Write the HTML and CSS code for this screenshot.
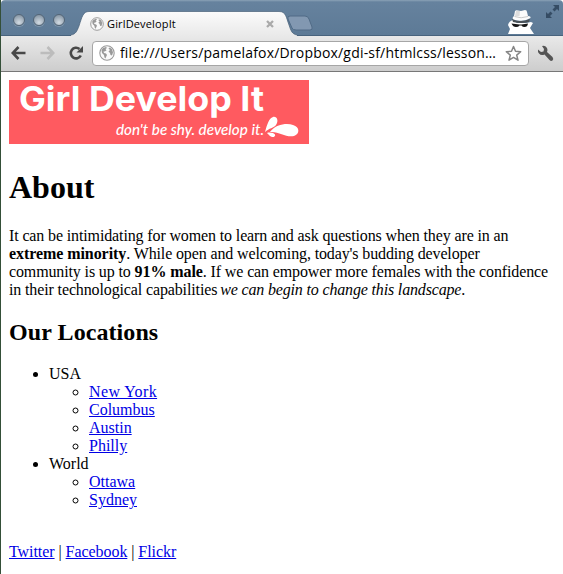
FILE: index.html
```html
<!DOCTYPE html>
<html lang="en">
<head>
<meta charset="utf-8">
<title>GirlDevelopIt</title>
<link rel="stylesheet" href="styles.css">
</head>
<body>
<div class="window">
  <header class="tabstrip">
    <div class="lights"><i></i><i></i><i></i></div>
    <div class="tab">
      <svg class="tab-shape" width="226" height="25" viewBox="0 0 226 25">
        <defs><linearGradient id="tabfill" x2="0" y2="1"><stop stop-color="#fbfbfb"/><stop offset="1" stop-color="#e9e9e9"/></linearGradient></defs>
        <path d="M0 25V24C5 23 6 20 8 15C11 6 12 .5 18 .5H208C215 .5 215 6 218 14C220 20 221 23 226 24V25Z" fill="url(#tabfill)"/>
        <path d="M0 24C5 23 6 20 8 15C11 6 12 .5 18 .5H208C215 .5 215 6 218 14C220 20 221 23 226 24" fill="none" stroke="#425b73" stroke-opacity=".65"/>
      </svg>
      <div class="tab-content">
        <svg width="14" height="14" viewBox="0 0 16 16"><use href="#globe"/></svg>
        <span class="tab-title">GirlDevelopIt</span>
        <svg class="close" width="8" height="8" viewBox="0 0 8 8"><path d="M1 1L7 7M7 1L1 7" stroke="#aaa" stroke-width="2.3"/></svg>
      </div>
    </div>
    <svg class="new-tab" width="27" height="17" viewBox="0 0 27 17"><path d="M3 1H18Q21 1 22 4L25 12Q26 15 23 15H9Q6 15 5 13L1 4Q0 1 3 1Z" fill="#8298b1" stroke="#506b86"/></svg>
    <svg class="incognito" width="28" height="26" viewBox="0 0 28 26">
      <path d="M1 25L3 20L1 16Q2 12 6 11L10 14H19L24 13L26 14L23 19L27 25Z" fill="#fff"/>
      <path d="M5 10Q13 14 23 10L22 13Q14 15 6 13Z" fill="#4b5257"/>
      <path d="M7 7L8 2Q9 1 11 1.500L14 2L18 1Q20 1 20 3L21 7Q24 7 23.500 9Q18 12.500 11 11.500Q4 10.500 6 8Z" fill="#fcfcfc"/>
      <path d="M9 2L13 2L12.500 7H8Z" fill="#ddd"/>
      <path d="M7.500 7.500Q14 10 21 7.500" fill="none" stroke="#bbb" stroke-width=".8"/>
      <path d="M4.500 14.500L12.500 15.500H14.500L21 14.500Q20.500 18 17.500 18Q15.500 18 14.500 16.500H12.500Q11.500 18 9 18Q6 18 4.500 14.500Z" fill="#151515"/>
    </svg>
    <svg class="fullscreen" width="15" height="15" viewBox="0 0 15 15"><path d="M8 1H14V7L12 5L9.500 7.500L7.500 5.500L10 3ZM1 8L3 10L5.500 7.500L7.500 9.500L5 12L7 14H1Z" fill="#354c64"/></svg>
  </header>
  <nav class="toolbar">
    <svg class="back" width="15" height="14" viewBox="0 0 15 14"><path d="M7.500 1L1.800 7L7.500 13M2 7H14.500" fill="none" stroke="#484848" stroke-width="2.600"/></svg>
    <svg class="forward" width="15" height="14" viewBox="0 0 15 14"><path d="M7.500 1L13.200 7L7.500 13M13 7H.5" fill="none" stroke="#bcbcbc" stroke-width="2.600"/></svg>
    <svg class="reload" width="16" height="16" viewBox="0 0 16 16"><path d="M12.800 10.500A5.300 5.300 0 1 1 11.500 4" fill="none" stroke="#484848" stroke-width="2.600"/><path d="M15 1V7.500H8.500Z" fill="#484848"/></svg>
    <div class="address">
      <svg class="site" width="16" height="16" viewBox="0 0 16 16">
        <g id="globe"><circle cx="8" cy="8" r="7.200" fill="#fafafa" stroke="#999" stroke-width="1.100"/><path d="M2.500 5L4 3L7 2L8 3L6.500 4L7.500 5.500L5.500 6.500L4.500 6.500L5 8L7 8.500L8 10L7 12L6.500 13.500L5.500 12.500L5 10L3 8ZM10.500 2.500L13 4L14 7.500L13 10.500L11.500 10L11 8L9.500 6.500L11 5L9.500 3.500Z" fill="#999"/></g>
      </svg>
      <svg class="url" width="380" height="22"><text x="0" y="16" textLength="376" lengthAdjust="spacing">file:///Users/pamelafox/Dropbox/gdi-sf/htmlcss/lesson…</text></svg>
      <svg class="star" width="17" height="17" viewBox="0 0 17 17"><path d="M8.500 1.500L10.500 6.300L15.700 6.700L11.700 10.100L13 15.200L8.500 12.400L4 15.200L5.300 10.100L1.300 6.700L6.500 6.300Z" fill="#fff" stroke="#858585" stroke-width="1.500" stroke-linejoin="round"/></svg>
    </div>
    <svg class="wrench" width="17" height="17" viewBox="0 0 17 17"><path d="M5 1Q8 0 10 3Q11 5 10 7L15.500 12Q17 14 15.500 15.500Q14 16.500 12.500 15L7.500 9.500Q4 11 2 8.500Q.5 7 1 4.500L4 7L6.500 6.500L7 4Z" fill="#555"/></svg>
  </nav>
  <main class="page">
    <svg class="banner" width="300" height="64" viewBox="0 0 300 64">
      <rect width="300" height="64" fill="#ff5a60"/>
      <text class="brand" x="10" y="31" textLength="245" lengthAdjust="spacingAndGlyphs">Girl Develop It</text>
      <text class="tagline" x="107" y="55" textLength="148" lengthAdjust="spacingAndGlyphs">don't be shy. develop it.</text>
      <path d="M256 52C258 45 260 38 264 37C268 36 270 41 267 45C265 48 260 48 256 52ZM261 52C267 44 278 43 284 45C291 47 291 54 285 56C277 58 270 51 261 52ZM258 53C261 52 265 53 266 54.500C267 57 263 58 261 56Z" fill="#fff"/>
    </svg>
    <h1>About</h1>
    <p>It can be intimidating for women to learn and ask questions when they are in an<br><strong>extreme minority</strong>. While open and welcoming, today's budding developer<br>community is up to <strong>91% male</strong>. If we can empower more females with the confidence<br>in their technological capabilities <em>we can begin to change this landscape</em>.</p>
    <h2>Our Locations</h2>
    <ul>
      <li>USA
        <ul><li><a class="york" href="#">New York</a></li><li><a href="#">Columbus</a></li><li><a href="#">Austin</a></li><li><a href="#">Philly</a></li></ul>
      </li>
      <li>World
        <ul><li><a href="#">Ottawa</a></li><li><a href="#">Sydney</a></li></ul>
      </li>
    </ul>
    <footer><a href="#">Twitter</a> | <a href="#">Facebook</a> | <a href="#">Flickr</a></footer>
  </main>
</div>
</body>
</html>
```
FILE: styles.css
```css
* { box-sizing: border-box; }
html { background: #fff; }
body { margin: 0; overflow: hidden; }
svg { display: block; flex: none; }
.window { height: 574px; border-left: 1px solid #344f38; background: #fff; }
.tabstrip {
  height: 36px; display: flex; align-items: flex-end;
  background: linear-gradient(#8ba2b7 0, #66829e 2px, #5d7a96 35px, #48637d 35px);
  border-radius: 4px 4px 0 0;
}
.lights { display: flex; gap: 8px; padding: 0 0 10px 12px; width: 70px; flex: none; }
.lights i {
  width: 12px; height: 12px; border-radius: 50%; border: 1px solid #536576;
  background: radial-gradient(circle at 50% 75%, #d3dce4, #8e9dab 75%);
  box-shadow: 0 1px #8198ad;
}
.tab { display: grid; width: 226px; height: 25px; flex: none; }
.tab-shape, .tab-content { grid-area: 1 / 1; }
.tab-content { display: flex; align-items: center; padding: 0 23px 0 19px; z-index: 1; }
.tab-title { margin-left: 3px; font: 11px/16px "Lucida Grande", "Open Sans", sans-serif; letter-spacing: .15px; }
.close { margin-left: auto; }
.new-tab { margin: 0 0 4px -10px; }
.incognito { margin: 0 10px 1px auto; }
.fullscreen { margin: 0 3px 17px 0; }
.toolbar {
  height: 36px; display: flex; align-items: center; padding: 0 9px 1px 10px;
  background: linear-gradient(#e9e9e9, #cdcdcd); border-bottom: 1px solid #777;
}
.forward { margin-left: 14px; }
.reload { margin-left: 13px; }
.address {
  display: flex; align-items: center; width: 437px; height: 25px; margin-left: 8px;
  padding-left: 6px; border: 1px solid #a6a6a6; border-radius: 4px; background: #fff; flex: none;
}
.url { margin-left: 5px; font: 14px "Lucida Grande", "Open Sans", sans-serif; }
.star { margin-left: 5px; }
.wrench { margin-left: 8px; }
.page { padding: 8px; font: 16px/18px "Liberation Serif", serif; color: #000; white-space: nowrap; }
.banner { overflow: visible; }
.brand { font: 700 34px Inter, sans-serif; fill: #fff; }
.tagline { font: italic 500 16px Lato, sans-serif; fill: #fff; }
h1 { margin: 25px 0 21px; font-size: 32px; line-height: 37px; }
p { margin: 0; letter-spacing: -.13px; }
strong { letter-spacing: -.07px; }
em { letter-spacing: -.16px; }
p em { margin-left: -1px; }
h2 { margin: 20px 0 19px; font-size: 24px; line-height: 27px; letter-spacing: .08px; }
ul { margin: 0; padding-left: 40px; }
a { color: #0000e5; text-decoration: underline; }
.york { letter-spacing: .4px; }
footer { margin-top: 34px; letter-spacing: -.06px; }
```
